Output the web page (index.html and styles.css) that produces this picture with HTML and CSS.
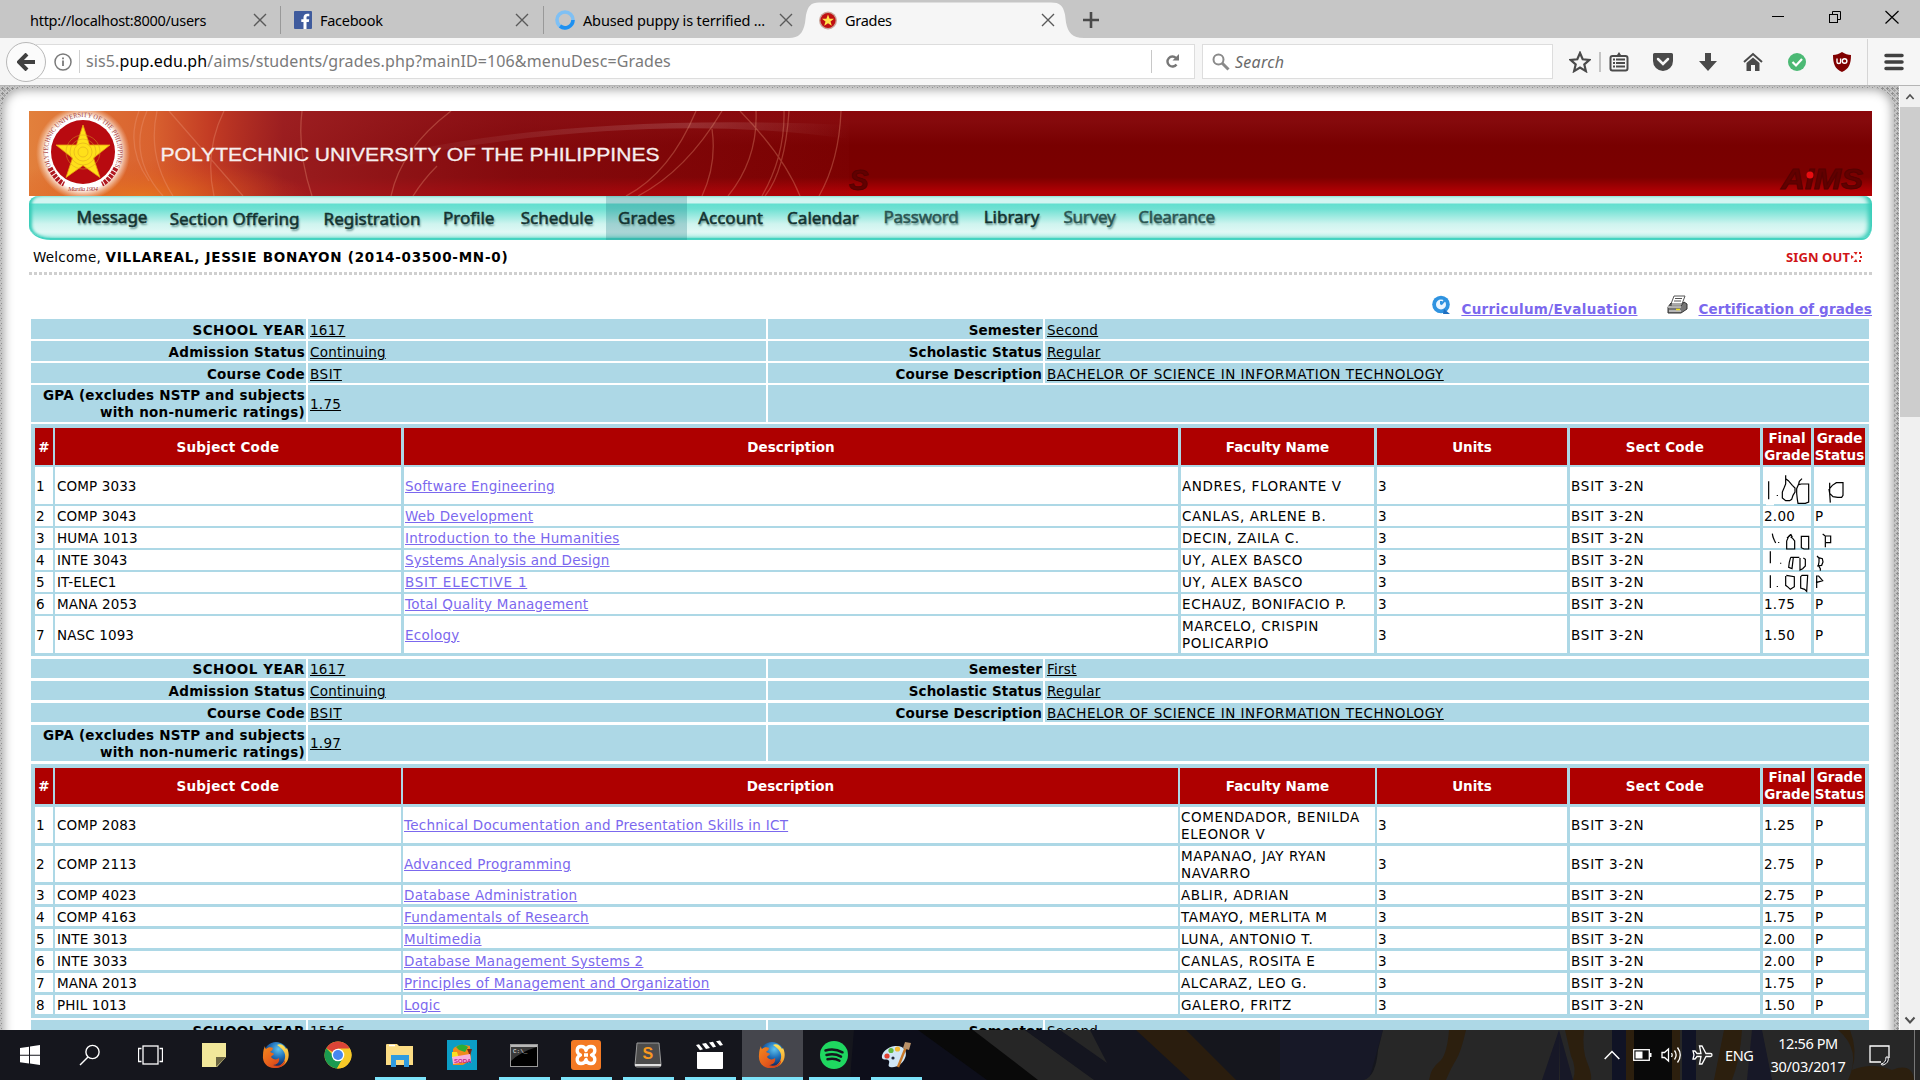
FILE: index.html
```html
<!DOCTYPE html>
<html lang="en">
<head>
<meta charset="utf-8">
<title>Grades</title>
<link rel="stylesheet" href="styles.css">
</head>
<body>
<svg class="defs" width="0" height="0">
  <defs>
    <radialGradient id="globe" cx=".6" cy=".3" r=".7"><stop offset="0" stop-color="#5fc3ee"/><stop offset=".5" stop-color="#1f6fb8"/><stop offset="1" stop-color="#12265c"/></radialGradient>
    <linearGradient id="fox" x1="0" y1="0" x2="1" y2="1"><stop offset="0" stop-color="#f28a1c"/><stop offset=".5" stop-color="#e8601c"/><stop offset="1" stop-color="#c8301a"/></linearGradient>
    <linearGradient id="tail" x1="0" y1="0" x2="0" y2="1"><stop offset="0" stop-color="#ffe45a"/><stop offset="1" stop-color="#f28a1c"/></linearGradient>
    <symbol id="firefox" viewBox="0 0 28 28">
      <circle cx="14" cy="13" r="12" fill="url(#globe)"/>
      <path d="M15 4c3-2 7 0 9 4l1-1c3 6 2 13-3 17-4 3-9 3-12 2 7 1 12-3 13-9 1-5-2-9-8-13z" fill="url(#tail)"/>
      <path d="M3 5c0 1 0 2 1 3 2-2 5-2 7-1 0 2-2 3-3 4 1 1 4 1 4 2s-2 1-3 3c2 3 6 3 8 1 1 4-2 7-6 7 5 2 10 0 12-5 1 3-3 8-9 8C6 28 0 22 1 14c0-4 1-7 2-9z" fill="url(#fox)"/>
    </symbol>
    <symbol id="close" viewBox="0 0 14 14"><path d="M1 1 13 13M13 1 1 13" stroke="currentColor" stroke-width="1.4" fill="none"/></symbol>
  </defs>
</svg>

<header class="browser">
  <div class="tabs">
    <div class="tab tab-1"><span class="tab-title">http://localhost:8000/users</span><svg class="x"><use href="#close"/></svg></div>
    <div class="tab tab-2">
      <svg class="fav" width="18" height="18" viewBox="0 0 18 18"><rect width="18" height="18" rx="1" fill="#3f5b9d"/><path d="M9.500 18v-7H7.300V8.300h2.200V6.600c0-2.600 1.500-3.900 3.800-3.900h2v2.600h-1.400c-1.100 0-1.400.5-1.400 1.400v1.600h2.700l-.4 2.700h-2.300v7z" fill="#fff"/></svg>
      <span class="tab-title">Facebook</span><svg class="x"><use href="#close"/></svg></div>
    <div class="tab tab-3">
      <svg class="fav" width="20" height="20" viewBox="0 0 20 20"><circle cx="10" cy="10" r="8" fill="none" stroke="#7fc0f4" stroke-width="3.600"/><path d="M18 10a8 8 0 0 1-13 6" fill="none" stroke="#1e90f0" stroke-width="3.600"/></svg>
      <span class="tab-title wide">Abused puppy is terrified ...</span><svg class="x"><use href="#close"/></svg></div>
    <div class="tab-active">
      <svg class="tab-shape" width="296" height="36" viewBox="0 0 296 36"><path d="M0 36c10 0 14-5 16-15l1-8C19 4 22 .5 30 .5h232c9 0 12 3 14 12l1 8c2 10 6 15.500 18 15.500z" fill="#f6f6f6"/></svg>
      <svg class="fav" width="18" height="19" viewBox="0 0 18 19"><circle cx="9" cy="9.500" r="9" fill="#c9a59a"/><circle cx="9" cy="9.500" r="7.600" fill="#c00f12"/><path d="M9 3.500l1.600 4.200 4.400.1-3.500 2.700 1.300 4.200L9 12.200l-3.800 2.500 1.300-4.200L3 7.800l4.400-.1z" fill="#ffe34a"/></svg>
      <span class="tab-title">Grades</span><svg class="x"><use href="#close"/></svg>
    </div>
    <svg class="plus" width="16" height="16" viewBox="0 0 16 16"><path d="M8 0v16M0 8h16" stroke="#4a4a4a" stroke-width="2.600"/></svg>
    <div class="win">
      <svg width="14" height="14" viewBox="0 0 14 14"><path d="M1 6.500h12" stroke="#000"/></svg>
      <svg width="14" height="14" viewBox="0 0 14 14" fill="none" stroke="#000"><rect x="1.500" y="4.500" width="8" height="8"/><path d="M4.500 4V1.500h8v8H10"/></svg>
      <svg width="14" height="14" viewBox="0 0 14 14"><path d="M.5 1 13.500 13.500M13.500 1 .5 13.500" stroke="#000" stroke-width="1.200"/></svg>
    </div>
  </div>
  <div class="toolbar">
    <div class="back"><svg width="18" height="18" viewBox="0 0 18 18"><path d="M10 1 2 9l8 8M2.500 9H18" fill="none" stroke="#404040" stroke-width="4"/></svg></div>
    <div class="url">
      <svg class="info-icon" width="18" height="18" viewBox="0 0 18 18"><circle cx="9" cy="9" r="8" fill="none" stroke="#7a7a7a" stroke-width="1.500"/><path d="M9 7.500V13M9 4.500v1.800" stroke="#7a7a7a" stroke-width="1.800"/></svg>
      <span class="address">sis5.<b>pup.edu.ph</b>/aims/students/grades.php?mainID=106&amp;menuDesc=Grades</span>
      <div class="reload"><svg width="15" height="15" viewBox="0 0 15 15"><path d="M11.500 10.500A5 5 0 1 1 11 4" fill="none" stroke="#777" stroke-width="2.400"/><path d="M14 0v6.500H7.500z" fill="#777"/></svg></div>
    </div>
    <div class="search">
      <svg width="18" height="18" viewBox="0 0 18 18"><circle cx="6.500" cy="6.500" r="5" fill="none" stroke="#8a8a8a" stroke-width="2"/><path d="m10 10 6.500 6.500" stroke="#8a8a8a" stroke-width="3"/></svg>
      <span>Search</span>
    </div>
    <div class="tools">
      <svg width="22" height="22" viewBox="0 0 22 22"><path d="m11 2 2.700 6.300 6.800.6-5.200 4.500 1.600 6.700-5.900-3.600-5.900 3.600 1.600-6.700L1.500 8.900l6.800-.6z" fill="none" stroke="#4a4a4a" stroke-width="2.200"/></svg>
      <i class="bar"></i>
      <svg class="list" width="20" height="20" viewBox="0 0 20 20"><path d="M6 3h2l2-3 2 3h2v2H6z" fill="#4a4a4a"/><rect x="1.500" y="4" width="17" height="14.500" rx="2" fill="none" stroke="#4a4a4a" stroke-width="2"/><path d="M4 7.500h2M7 7.500h9M4 11h2M7 11h9M4 14.500h2M7 14.500h9" stroke="#4a4a4a" stroke-width="1.800"/></svg>
      <svg width="22" height="20" viewBox="0 0 22 20"><path d="M2.500 1h17A1.500 1.500 0 0 1 21 2.500V9a10 10 0 0 1-20 0V2.500A1.500 1.500 0 0 1 2.500 1z" fill="#4a4a4a"/><path d="m6 7 5 5 5-5" fill="none" stroke="#f6f6f6" stroke-width="2.500" stroke-linecap="round"/></svg>
      <svg width="20" height="20" viewBox="0 0 20 20"><path d="M7 1h6v8h6l-9 10L1 9h6z" fill="#4a4a4a"/></svg>
      <svg width="20" height="20" viewBox="0 0 20 20"><path d="m1 10 9-8 9 8" fill="none" stroke="#4a4a4a" stroke-width="2"/><path d="M10 5.500 3.500 11v8H8v-6h4v6h4.500v-8z" fill="#4a4a4a"/></svg>
      <svg width="20" height="20" viewBox="0 0 20 20"><circle cx="10" cy="10" r="9" fill="#4bb974"/><path d="m5.500 10 3.500 3.500 6-6.500" fill="none" stroke="#fff" stroke-width="2.200"/></svg>
      <svg width="20" height="20" viewBox="0 0 20 20"><path d="M10 0c3 2 6 3 9 3 0 9-2 14-9 17C3 17 1 12 1 3c3 0 6-1 9-3z" fill="#800000"/><path d="M5 6.500v3.500q0 1.500 1.800 1.500t1.800-1.500V6.500" fill="none" stroke="#fff" stroke-width="1.400"/><circle cx="12.600" cy="9" r="2.300" fill="none" stroke="#fff" stroke-width="1.400"/></svg>
      <i class="bar tall-bar"></i>
      <svg width="20" height="18" viewBox="0 0 20 18"><path d="M2 2.500h16M2 9h16M2 15.500h16" stroke="#404040" stroke-width="3.500" stroke-linecap="round"/></svg>
    </div>
  </div>
</header>

<div class="viewport">
<div class="patterned">
<main class="sheet">
  <div class="banner">
    <svg width="1843" height="85" viewBox="0 0 1843 85">
      <defs>
        <linearGradient id="red" x1="0" y1="0" x2="0" y2="1"><stop offset="0" stop-color="#8a060a"/><stop offset=".12" stop-color="#850a0c"/><stop offset=".4" stop-color="#780000"/><stop offset=".78" stop-color="#7b0000"/><stop offset=".95" stop-color="#b20004"/><stop offset="1" stop-color="#b40004"/></linearGradient>
        <linearGradient id="orange" x1="0" y1="0" x2="1" y2="0"><stop offset="0" stop-color="#e2803c"/><stop offset=".15" stop-color="#d9622f"/><stop offset=".22" stop-color="#c33c24"/><stop offset=".31" stop-color="#a02224" stop-opacity=".85"/><stop offset=".6" stop-color="#8c1218" stop-opacity=".55"/><stop offset="1" stop-color="#8a1014" stop-opacity=".1"/></linearGradient>
        <radialGradient id="glow"><stop offset="0" stop-color="#fff"/><stop offset=".78" stop-color="#fff"/><stop offset="1" stop-color="#fbd9c4" stop-opacity="0"/></radialGradient>
        <radialGradient id="flame" cx=".4" cy="1" r=".6"><stop offset="0" stop-color="#e8781c" stop-opacity=".8"/><stop offset="1" stop-color="#d8501c" stop-opacity="0"/></radialGradient>
        <linearGradient id="sweep" x1="0" y1="0" x2="1" y2="0"><stop offset="0" stop-color="#fff" stop-opacity="0"/><stop offset=".7" stop-color="#fff" stop-opacity=".14"/><stop offset="1" stop-color="#fff" stop-opacity="0"/></linearGradient>
        <path id="ring" d="M23.700 58.500A35 35 0 1 1 84.300 58.500"/>
      </defs>
      <rect width="1843" height="85" fill="url(#red)"/>
      <rect width="820" height="85" fill="url(#orange)"/>
      <rect y="25" width="280" height="60" fill="url(#flame)"/>
      <path d="M300 60Q500 0 820 14v14Q600-4 300 60z" fill="url(#sweep)"/>
      <g fill="none" stroke="#f0a080" stroke-opacity=".32" stroke-width="1.300">
        <path d="M118 0q-20 45 16 85M128 0q-10 45 16 85M110 0q-14 36 10 70M140 0 214 85M195 0q-20 40-10 85M273 0q-5 40 10 85M422 0q-50 38-60 85M408 55q-14 14-24 30"/>
        <path d="M693 0q-36 60-84 85M667 0q-26 62-70 85M711 0q44 45 60 85M683 18q5 35-10 67M727 0q2 48-28 85M755 0q1 45-22 85M812 0q-2 50-22 85M760 0q-4 60-24 85"/>
      </g>
      <circle cx="54" cy="42" r="47" fill="url(#glow)"/>
      <circle cx="54" cy="41" r="32" fill="#b80a10"/>
      <path d="m54 14 6.500 20 20.500 0-16.500 13 6.500 19.500-17-12-17 12 6.500-19.500-16.500-13h20.500z" fill="#ffe01a" stroke="#e8a010" stroke-width=".8"/>
      <g fill="none" stroke="#d8a020" stroke-width=".7" opacity=".7"><circle cx="54" cy="41" r="5"/><circle cx="54" cy="41" r="9"/><circle cx="54" cy="41" r="13"/><circle cx="54" cy="41" r="17"/></g>
      <path d="M21 57q7 13 14 16M87 57q-7 13-14 16" fill="none" stroke="#b01820" stroke-width="5" stroke-dasharray="3 1"/>
      <text class="seal"><textPath href="#ring" textLength="143" lengthAdjust="spacingAndGlyphs">POLYTECHNIC UNIVERSITY OF THE PHILIPPINES</textPath></text>
      <text class="seal low" x="39" y="80" textLength="30">Manila 1904</text>
      <text class="uni" x="131.500" y="49.500" textLength="499" lengthAdjust="spacingAndGlyphs">POLYTECHNIC UNIVERSITY OF THE PHILIPPINES</text>
      <text class="emboss" x="820" y="79">S</text>
      <text class="emboss" x="1752" y="78" textLength="82" lengthAdjust="spacingAndGlyphs">AIMS</text>
      <circle cx="1781" cy="64" r="3.500" fill="#e80c10"/>
    </svg>
  </div>
  <nav class="menu">
    <a class="m1">Message</a><a class="m2">Section Offering</a><a class="m3">Registration</a><a class="m4">Profile</a><a class="m5">Schedule</a><a class="m6 on">Grades</a><a class="m7">Account</a><a class="m8">Calendar</a><a class="m9">Password</a><a class="m10">Library</a><a class="m11">Survey</a><a class="m12">Clearance</a>
  </nav>
  <div class="welcome">
    <span>Welcome, <b>VILLAREAL, JESSIE BONAYON (2014-03500-MN-0)</b></span>
    <span class="signout">SIGN OUT<svg width="11" height="12" viewBox="0 0 11 12" fill="#d8201c"><path d="M0 4v4l3-2zM2.500 1h4L5 4zM2.500 11h4L5 8zM8 1h2v2H8zM8 9h2v2H8zM9 5h2v2H9z"/></svg></span>
  </div>
  <div class="dots"></div>
  <div class="links">
    <svg width="19" height="20" viewBox="0 0 19 20"><circle cx="9" cy="9.500" r="8.800" fill="#2f93e0"/><path d="m12 14 6 5h-7z" fill="#1f6fc0"/><circle cx="9" cy="9.500" r="5" fill="#eaf5ff"/><path d="M9 9.500 14 4M9 9.500V6" stroke="#2f93e0" stroke-width="2"/></svg>
    <a class="l1">Curriculum/Evaluation</a>
    <svg class="printer" width="21" height="20" viewBox="0 0 21 20"><path d="M7 1h11l-3 8H4z" fill="#fff" stroke="#555"/><path d="M8 3.500h7M7 6h7" stroke="#555"/><path d="m4 8-3 4v6h13l6-4V9l-3-2-3 4H4z" fill="#777" stroke="#333"/><path d="M1 12h13M2 16h12" stroke="#ccc" stroke-width="1.500"/><path d="M9 14.500h4" stroke="#f0e020" stroke-width="1.500"/></svg>
    <a class="l2">Certification of grades</a>
  </div>

  <section class="term gap2">
    <table class="info">
      <colgroup><col class="i1"><col class="i2"><col class="i3"><col></colgroup>
      <tr><th class="caps">SCHOOL YEAR</th><td><u>1617</u></td><th>Semester</th><td><u>Second</u></td></tr>
      <tr><th>Admission Status</th><td><u>Continuing</u></td><th>Scholastic Status</th><td><u>Regular</u></td></tr>
      <tr><th>Course Code</th><td class="caps"><u>BSIT</u></td><th>Course Description</th><td class="caps"><u>BACHELOR OF SCIENCE IN INFORMATION TECHNOLOGY</u></td></tr>
      <tr class="tall"><th>GPA (excludes NSTP and subjects<br>with non-numeric ratings)</th><td><u>1.75</u></td><td colspan="2"></td></tr>
    </table>
    <div class="grades">
    <table>
      <colgroup><col class="g1"><col class="g2"><col class="g3"><col class="g4"><col class="g5"><col class="g5"><col class="g6"><col class="g7"></colgroup>
      <tr class="tall"><th>#</th><th>Subject Code</th><th>Description</th><th>Faculty Name</th><th>Units</th><th>Sect Code</th><th>Final<br>Grade</th><th>Grade<br>Status</th></tr>
      <tr class="tall"><td>1</td><td>COMP 3033</td><td><a>Software Engineering</a></td><td>ANDRES, FLORANTE V</td><td>3</td><td>BSIT 3-2N</td><td></td><td></td></tr>
      <tr><td>2</td><td>COMP 3043</td><td><a>Web Development</a></td><td>CANLAS, ARLENE B.</td><td>3</td><td>BSIT 3-2N</td><td>2.00</td><td>P</td></tr>
      <tr><td>3</td><td>HUMA 1013</td><td><a>Introduction to the Humanities</a></td><td>DECIN, ZAILA C.</td><td>3</td><td>BSIT 3-2N</td><td></td><td></td></tr>
      <tr><td>4</td><td>INTE 3043</td><td><a>Systems Analysis and Design</a></td><td>UY, ALEX BASCO</td><td>3</td><td>BSIT 3-2N</td><td></td><td></td></tr>
      <tr><td>5</td><td>IT-ELEC1</td><td class="caps"><a>BSIT ELECTIVE 1</a></td><td>UY, ALEX BASCO</td><td>3</td><td>BSIT 3-2N</td><td></td><td></td></tr>
      <tr><td>6</td><td>MANA 2053</td><td><a>Total Quality Management</a></td><td>ECHAUZ, BONIFACIO P.</td><td>3</td><td>BSIT 3-2N</td><td>1.75</td><td>P</td></tr>
      <tr class="tall"><td>7</td><td>NASC 1093</td><td><a>Ecology</a></td><td>MARCELO, CRISPIN<br>POLICARPIO</td><td>3</td><td>BSIT 3-2N</td><td>1.50</td><td>P</td></tr>
    </table>
    <svg class="pen" width="140" height="140" viewBox="0 0 420 420">
      <path d="M78 133h24" stroke="#fff" stroke-width="6"/>
      <g fill="none" stroke="#000" stroke-width="3.600">
        <path d="M86 64v54M112 105v3M137 46v26l-4 10-6 14v18l10 8h12l6-4 4-12 6-10v-12l-8-8-12-14-8-6M186 56l-8 8-2 8-6 14v14l2 18 2 12h22l10-4V72h-22l-8 2"/>
        <path d="M269 68v32l2 28M307 68h-18l-12 8-10 12 2 12 10 10 14 2h12l4-6V68z"/>
        <path d="M97 221l2 10 4 10 4 8M116 246v3M141 234l12-10 4 8M152 223l-6 6-6 14v24h24v-24l-6-8-6-4M184 227v36l8 4h14v-38h-22M248 222l8 6v34M258 228h14v20h-14"/>
        <path d="M91 274v36M122 308v3M152 292l-4 14-2 16 10 4 4-34M152 292h26M180 294v36l8-4 8-8v-20l-6-4M231 288l6 6v12l-2 10 6 10v6M233 292l14 4 2 10-4 10-14 2"/>
        <path d="M91 346v38M112 378v3M137 348l0 28 8 6 6 6 12-8 0-30-24-4M186 346l-4 4 0 34 12 4 6 6 3-48h-16zM230 348v36M228 348h8l12 14-20 6"/>
      </g>
    </svg>
    </div>
  </section>

  <section class="term gap3">
    <table class="info">
      <colgroup><col class="i1"><col class="i2"><col class="i3"><col></colgroup>
      <tr><th class="caps">SCHOOL YEAR</th><td><u>1617</u></td><th>Semester</th><td><u>First</u></td></tr>
      <tr><th>Admission Status</th><td><u>Continuing</u></td><th>Scholastic Status</th><td><u>Regular</u></td></tr>
      <tr><th>Course Code</th><td class="caps"><u>BSIT</u></td><th>Course Description</th><td class="caps"><u>BACHELOR OF SCIENCE IN INFORMATION TECHNOLOGY</u></td></tr>
      <tr class="tall"><th>GPA (excludes NSTP and subjects<br>with non-numeric ratings)</th><td><u>1.97</u></td><td colspan="2"></td></tr>
    </table>
    <div class="grades">
    <table>
      <colgroup><col class="g1"><col class="g2"><col class="g3"><col class="g4"><col class="g5"><col class="g5"><col class="g6"><col class="g7"></colgroup>
      <tr class="tall"><th>#</th><th>Subject Code</th><th>Description</th><th>Faculty Name</th><th>Units</th><th>Sect Code</th><th>Final<br>Grade</th><th>Grade<br>Status</th></tr>
      <tr class="tall"><td>1</td><td>COMP 2083</td><td><a>Technical Documentation and Presentation Skills in ICT</a></td><td>COMENDADOR, BENILDA<br>ELEONOR V</td><td>3</td><td>BSIT 3-2N</td><td>1.25</td><td>P</td></tr>
      <tr class="tall"><td>2</td><td>COMP 2113</td><td><a>Advanced Programming</a></td><td>MAPANAO, JAY RYAN<br>NAVARRO</td><td>3</td><td>BSIT 3-2N</td><td>2.75</td><td>P</td></tr>
      <tr><td>3</td><td>COMP 4023</td><td><a>Database Administration</a></td><td>ABLIR, ADRIAN</td><td>3</td><td>BSIT 3-2N</td><td>2.75</td><td>P</td></tr>
      <tr><td>4</td><td>COMP 4163</td><td><a>Fundamentals of Research</a></td><td>TAMAYO, MERLITA M</td><td>3</td><td>BSIT 3-2N</td><td>1.75</td><td>P</td></tr>
      <tr><td>5</td><td>INTE 3013</td><td><a>Multimedia</a></td><td>LUNA, ANTONIO T.</td><td>3</td><td>BSIT 3-2N</td><td>2.00</td><td>P</td></tr>
      <tr><td>6</td><td>INTE 3033</td><td><a>Database Management Systems 2</a></td><td>CANLAS, ROSITA E</td><td>3</td><td>BSIT 3-2N</td><td>2.00</td><td>P</td></tr>
      <tr><td>7</td><td>MANA 2013</td><td><a>Principles of Management and Organization</a></td><td>ALCARAZ, LEO G.</td><td>3</td><td>BSIT 3-2N</td><td>1.75</td><td>P</td></tr>
      <tr><td>8</td><td>PHIL 1013</td><td><a>Logic</a></td><td>GALERO, FRITZ</td><td>3</td><td>BSIT 3-2N</td><td>1.50</td><td>P</td></tr>
    </table>
    </div>
  </section>

  <section class="term gap2">
    <table class="info">
      <colgroup><col class="i1"><col class="i2"><col class="i3"><col></colgroup>
      <tr><th class="caps">SCHOOL YEAR</th><td><u>1516</u></td><th>Semester</th><td><u>Second</u></td></tr>
    </table>
  </section>
</main>
</div>
<div class="scrollbar">
  <svg width="20" height="26" viewBox="0 0 20 26"><path d="m5.500 16 4.500-5 4.500 5" fill="none" stroke="#505050" stroke-width="2"/></svg>
  <div class="thumb"></div>
  <svg width="20" height="20" viewBox="0 0 20 20"><path d="m5.500 7.500 4.500 5 4.500-5" fill="none" stroke="#505050" stroke-width="2"/></svg>
</div>
</div>

<footer class="taskbar">
  <svg class="wall" width="1070" height="50" viewBox="850 0 1070 50" preserveAspectRatio="none">
    <path d="M854 0h90l60 50H850z" fill="#0d0e1a"/><path d="M918 0h57l67 50h-55z" fill="#090909"/><path d="M973 0h52l70 50h-57z" fill="#262626"/>
    <path d="M1025 0h111l54 50h-96z" fill="#14151f"/><path d="M1060 0h30l17 33z" fill="#262626"/><path d="M1136 0h50l50 50h-46z" fill="#2a1d0e"/>
    <path d="M1280 0h103l-14 50h-89z" fill="#171827"/><path d="M1383 0h537v50H1364q12-4 14-30z" fill="#272727"/>
    <path d="M1449 0h17q-5 22-10 30t-10 20h-17q2-12 10-18t10-32z" fill="#2c1f0e"/>
    <path d="m1559 0 1 50h-18zM1559 0v50h14z" fill="#171827"/><path d="M1565 0h19q-2 20 3 32t4 18h-18q4-12-2-24z" fill="#2c1f0e"/>
    <path d="M1612 0h14v50h-14z" fill="#101325"/><path d="M1626 0h8v50h-8zM1672 0h8v50h-8z" fill="#2c1f0e"/><path d="M1634 0h38v50h-38z" fill="#090909"/><path d="M1682 0h14v50h-14z" fill="#101325"/>
    <path d="M1724 0h18q-2 30-10 50h-18z" fill="#2c1f0e"/><path d="m1752 0 10 0 10 50h-25z" fill="#171827"/><path d="M1838 0h12q8 20 2 40 20-8 40 0 20-8 22 10h-66q14-30-10-50z" fill="#2c1f0e"/>
  </svg>
  <div class="slot sys"><svg width="20" height="20" viewBox="0 0 20 20" fill="#fff"><path d="M0 3l9-1.300v8H0zM10 1.500 20 0v9.700H10zM0 10.700h9v7.800l-9-1.200zM10 10.700h10V20l-10-1.400z"/></svg></div>
  <div class="slot sys"><svg width="22" height="22" viewBox="0 0 22 22" fill="none" stroke="#fff" stroke-width="1.400"><circle cx="13.500" cy="8" r="6.600"/><path d="m9 13-8 8"/></svg></div>
  <div class="slot sys"><svg width="25" height="20" viewBox="0 0 25 20" fill="none" stroke="#fff" stroke-width="1.300"><rect x="5" y="1" width="15" height="18"/><path d="M3.500 3.500h-3v13h3M21.500 3.500h3v13h-3"/></svg></div>
  <div class="slot app"><svg width="24" height="24" viewBox="0 0 24 24"><path d="M0 0h24v14l-9 10H0z" fill="#f1e79a"/><path d="M14 14h10l-10 10z" fill="#6a6441"/></svg></div>
  <div class="slot app"><svg width="28" height="28"><use href="#firefox"/></svg></div>
  <div class="slot app"><svg width="28" height="28" viewBox="0 0 28 28"><circle cx="14" cy="14" r="13.500" fill="#f7c928"/><path d="M14 14 2.300 7.200A13.500 13.500 0 0 1 25.700 7.200z" fill="#dc4437"/><path d="M2.300 7.200A13.500 13.500 0 0 0 13 27.500L19 17 14 14H9z" fill="#1a9a50"/><path d="M14 7.500h11.800a13.500 13.500 0 0 1-12.800 20L19 17z" fill="#f7c928"/><circle cx="14" cy="14" r="6.300" fill="#fff"/><circle cx="14" cy="14" r="5" fill="#4787f0"/></svg></div>
  <div class="slot app open"><svg width="28" height="24" viewBox="0 0 28 24"><path d="M0 2q0-1 1-1h10l2 2h14v19H0z" fill="#fbdc84"/><path d="M3 2.500h6" stroke="#fff" stroke-width="1.500"/><path d="M5 24V12h18v12h-5v-7h-8v7z" fill="#2f9be0"/></svg></div>
  <div class="slot app"><svg width="30" height="30" viewBox="0 0 30 30"><rect width="30" height="30" fill="#0b9dc5"/><path d="M6 9q5-6 17-3l1 14-8 5H6z" fill="#f08a1c"/><path d="M9 7q6-5 12 0l-3 5-6-2z" fill="#2cae34"/><path d="M5 12h5l2 6H5z" fill="#f8e020"/><path d="M20 9h5l-2 7z" fill="#7a2616"/><path d="m5 17 18-3 1 7-18 3z" fill="#f7b0dc"/><text class="soda" x="7" y="22.500">SODA</text></svg></div>
  <div class="slot app open"><svg width="28" height="23" viewBox="0 0 28 23"><rect x=".5" y=".5" width="27" height="22" fill="#000" stroke="#999"/><path d="M1 1h26v2H1z" fill="#b8b8b8"/><path d="M1 3h26Q10 8 1 17z" fill="#3a3a3a"/><text class="cmd" x="3" y="9">C:\_</text></svg></div>
  <div class="slot app open"><svg width="30" height="30" viewBox="0 0 30 30"><rect width="30" height="30" rx="3" fill="#f47a24"/><path d="M9.500 15C4.500 13 5.500 6.500 10 6.500c3 0 4.500 2 5 4 .5-2 2-4 5-4 4.500 0 5.500 6.500.5 8.500 5 2 4 8.500-.5 8.500-3 0-4.500-2-5-4-.5 2-2 4-5 4-4.500 0-5.500-6.500-.5-8.500zM13 15h4" fill="none" stroke="#fff" stroke-width="3.300" stroke-linejoin="round"/></svg></div>
  <div class="slot app open"><svg width="28" height="26" viewBox="0 0 28 26"><path d="M3 1h22l2 22q0 2-2 2H3q-2 0-2-2z" fill="#4c4c4c" stroke="#999"/><path d="M1 22h26v2H1z" fill="#e0e0e0"/><text class="subl" x="8.500" y="17">S</text></svg></div>
  <div class="slot app open"><svg width="28" height="30" viewBox="0 0 28 30"><path d="M1 12h26v16q0 1-1 1H2q-1 0-1-1z" fill="#fff"/><path d="m0 5 3-.8 4 5-3 1zM6 3.800l4-.8 4 5-4 .9zM13 2.500l4-.8 3 5-3 .9zM20 1.200l4-.8L27 5l-3 .8z" fill="#fff"/></svg></div>
  <div class="slot app open active"><svg width="28" height="28"><use href="#firefox"/></svg></div>
  <div class="slot app open"><svg width="28" height="28" viewBox="0 0 28 28"><circle cx="14" cy="14" r="14" fill="#1fd760"/><path d="M5.500 9.500q9-2.500 17 1.800M6.500 14q8-2 14.500 1.600M7.500 18.300q7-1.600 12 1.400" fill="none" stroke="#15161d" stroke-width="2.500" stroke-linecap="round"/></svg></div>
  <div class="slot app open"><svg width="30" height="28" viewBox="0 0 30 28"><path d="M14 5c9-1 13 6 10 12-3 7-9 10-15 9-3-1 0-4-1-6-1-3-6 0-7-3-1-5 5-11 13-12z" fill="#cfe6f6"/><circle cx="6" cy="15" r="2.600" fill="#e04030"/><circle cx="10" cy="9.500" r="2.600" fill="#60b840"/><circle cx="16.500" cy="8" r="2.600" fill="#f4b830"/><circle cx="12" cy="17" r="1.600" fill="#20283a"/><path d="M17 26 25 6" stroke="#c87828" stroke-width="2.400"/><path d="m22 7 2-6 6 1-2 7z" fill="#b89068"/></svg></div>
  <div class="tray">
    <svg class="t1" width="16" height="10" viewBox="0 0 16 10"><path d="M.7 9 8 1.500 15.300 9" fill="none" stroke="#fff" stroke-width="1.500"/></svg>
    <svg class="t2" width="19" height="12" viewBox="0 0 19 12"><rect x=".7" y=".7" width="15.600" height="10.600" fill="none" stroke="#fff" stroke-width="1.300"/><path d="M2.500 2.500h7v7h-7zM17 4h1.500v4H17z" fill="#fff"/></svg>
    <svg class="t3" width="21" height="18" viewBox="0 0 21 18" fill="none" stroke="#fff" stroke-width="1.300"><path d="M1 6.500h2.500L7.500 3v12l-4-3.500H1z"/><path d="M10.500 7q1.300 2 0 4M13.500 4.500q3.300 4.500 0 9M16.500 1.500q5.500 7.500 0 15"/></svg>
    <svg class="t4" width="21" height="20" viewBox="0 0 21 20"><path d="M1 6h2l2 2.500h4L7.500 1H10l4 7.500h4.500a1.500 1.500 0 0 1 0 3H14L10 19H7.500L9 11.500H5L3 14H1l1-4z" fill="none" stroke="#fff" stroke-width="1.300"/></svg>
    <span class="lang">ENG</span>
    <div class="clock"><span>12:56 PM</span><span>30/03/2017</span></div>
    <svg class="t5" width="21" height="21" viewBox="0 0 21 21"><path d="M12 17H1V1h19v12" fill="none" stroke="#fff" stroke-width="1.300"/><path d="M19 12q1.500 6-5 8-2 0-2-1 5-1 5-7z" fill="#15161d" stroke="#fff"/></svg>
    <i class="peek"></i>
  </div>
</footer>
</body>
</html>
```
FILE: styles.css
```css
* { box-sizing: border-box; }
body { margin: 0; width: 1920px; height: 1080px; overflow: hidden; display: flex; flex-direction: column; font-family: "DejaVu Sans", Verdana, sans-serif; font-size: 13.500px; letter-spacing: .25px; color: #000; background: #fff; }
svg { flex: none; display: block; }
.defs { position: absolute; }

/* browser chrome */
.browser { flex: none; height: 86px; font-family: "Noto Sans", "Open Sans", sans-serif; border-bottom: 1px solid #b5b5b5; background: #f6f6f6; }
.tabs { height: 38px; background: #c6c6c6; display: flex; align-items: center; }
.tab { height: 28px; margin-top: 2px; display: flex; align-items: center; border-right: 1px solid #999; }
.tab-title { font-size: 14.500px; line-height: 20px; letter-spacing: -.28px; white-space: nowrap; flex: 1; }
.tab-title.wide { letter-spacing: -.15px; }
.x { width: 14px; height: 14px; color: #5a5a5a; }
.fav { margin-right: 8px; }
.tab-1 { width: 281px; padding: 0 13px 0 30px; }
.tab-2 { width: 263px; padding: 0 14px 0 13px; }
.tab-3 { width: 250px; padding: 0 1px 0 11px; border: 0; }
.tab-active { position: relative; width: 280px; height: 38px; padding: 2px 19px 0 25px; display: flex; align-items: center; }
.tab-shape { position: absolute; left: -5px; top: 2px; }
.tab-active > :not(.tab-shape) { position: relative; }
.plus { margin-left: 9px; margin-top: 2px; }
.win { margin-left: auto; display: flex; gap: 43px; padding: 0 21px 4px 0; }
.toolbar { height: 47px; display: flex; align-items: center; padding-left: 6px; }
.back { flex: none; z-index: 1; width: 40px; height: 40px; border: 1px solid #b8b8b8; border-radius: 50%; background: #fbfbfb; display: flex; align-items: center; justify-content: center; }
.url { width: 1159px; height: 35px; margin-left: -10px; border: 1px solid #ddd; background: #fff; display: flex; align-items: center; padding-left: 17px; }
.address { margin-left: 7px; padding-left: 6px; height: 23px; border-left: 1px solid #d0d0d0; font-size: 16px; line-height: 23px; letter-spacing: .12px; color: #7a7a7a; flex: 1; }
.address b { font-weight: 400; color: #000; }
.reload { width: 43px; height: 23px; border-left: 1px solid #c8c8c8; display: flex; align-items: center; justify-content: center; }
.reload svg { margin-right: 2px; }
.search { width: 351px; height: 35px; margin-left: 7px; border: 1px solid #ddd; background: #fff; display: flex; align-items: center; gap: 5px; padding-left: 9px; font-size: 16px; font-style: italic; color: #6a6a6a; }
.tools { flex: 1; height: 100%; display: flex; align-items: center; padding: 0 16px 0 16px; }
.tools svg { margin-right: 24.500px; }
.tools svg:first-child { margin-right: 8px; }
.tools .list { margin-right: 22.500px; }
.tools svg:last-child, .tools svg:nth-last-child(3) { margin-right: 0; }
.bar { width: 2px; height: 20px; margin-right: 8px; background: #c4c4c4; }
.bar.tall-bar { width: 1px; height: 46px; margin: 0 16px 0 auto; background: #d5d5d5; }

/* page */
.viewport { height: 944px; display: flex; overflow: hidden; }
.patterned { width: 1899px; padding: 2px 5px 0 2px; background-color: #c4c4c4; background-image: radial-gradient(#8f8f8f 1px, transparent 1.200px), radial-gradient(#a4a4a4 1px, transparent 1.200px); background-size: 5px 5px; background-position: 0 0, 2px 2px; }
.sheet { height: 990px; padding: 23px 20px 0 27px; border-radius: 20px; background: #fff; box-shadow: inset 0 0 11px 1px #999; }
.banner { width: 1843px; height: 85px; }
.banner text { letter-spacing: 0; }
.uni { font: 19px "Liberation Sans", Arial, sans-serif; fill: #f7eeee; stroke: #f7eeee; stroke-width: .3px; }
.seal { font: 7px "Liberation Serif", serif; fill: #a33a3a; }
.seal.low { font-size: 7px; font-style: italic; }
.emboss { font: italic bold 29px "Liberation Sans", Arial, sans-serif; fill: #620000; stroke: #560000; stroke-width: 1px; }
.menu { width: 1843px; height: 44px; border-radius: 10px 8px 10px 22px / 8px 8px 14px 14px; border-bottom: 2px solid #45d3c1; display: flex; background: linear-gradient(#d3f5f1 0 7px, #63dfcf 8px, #6fe1d3 13px, #cff4ef 28px, #e0f8f5 36px, #b9efe8 42px); box-shadow: inset 4px 0 3px -1px #38cdb9, inset -5px 0 4px -1px #38cdb9; }
.menu a { flex: none; height: 44px; text-align: center; font: 400 17px/43px "Noto Sans", sans-serif; letter-spacing: 0; color: #123230; text-shadow: 1px 2px 2px #5a8a86; white-space: nowrap; -webkit-text-stroke: .5px #123230; text-decoration: none; }
.menu .m1 { width: 114px; margin-left: 26px; line-height: 42px; }
.menu .m2 { width: 131px; line-height: 46px; }
.menu .m3 { width: 144px; line-height: 46px; }
.menu .m4 { width: 50px; margin-left: -1px; margin-right: 1px; }
.menu .m5 { width: 112px; padding-left: 14px; }
.menu .on { width: 81px; background: rgba(30,120,130,.27); }
.menu .m7 { width: 87px; }
.menu .m8 { width: 98px; }
.menu .m9 { width: 98px; }
.menu .m10 { width: 83px; line-height: 42px; }
.menu .m11 { width: 73px; }
.menu .m12 { width: 101px; }
.menu .m9, .menu .m11, .menu .m12 { color: #2a5552; line-height: 42px; letter-spacing: -.25px; -webkit-text-stroke: .5px #2a5552; }
.welcome { width: 1843px; height: 32px; padding: 1px 10px 0 4px; display: flex; justify-content: space-between; align-items: center; }
.welcome b { letter-spacing: .75px; }
.signout { display: flex; align-items: center; gap: 1px; font: bold 13px "Noto Sans", sans-serif; letter-spacing: .1px; color: #d01418; }
.dots { width: 1843px; height: 3px; background: repeating-linear-gradient(90deg, #cfcfcf 0 3px, transparent 3px 5px); }
.links { width: 1843px; height: 44px; padding-bottom: 1px; display: flex; align-items: flex-end; justify-content: flex-end; font-weight: bold; }
.links svg { margin-bottom: 3px; }
.links a { line-height: 17px; margin-left: 10px; letter-spacing: .35px; }
.links .l2 { letter-spacing: .1px; }
.links .printer { margin-left: 30px; }
a { color: #7b68ee; text-decoration: underline; }

table { table-layout: fixed; border-collapse: separate; border-spacing: 0; width: 100%; }
.term { --g: 2px; width: 1838px; margin-left: 2px; }
.gap3 { --g: 3px; }
tr { height: 22px; }
tr.tall { height: 39px; }
th, td { padding: 1px 2px 0; line-height: 17px; border: 0 solid #fff; border-bottom-width: var(--g); text-align: left; white-space: nowrap; }
.info th, .info td { background: #add8e6; border-right-width: 2px; background-clip: padding-box; }
.gap2 .info th, .gap2 .info td { padding-top: 3px; }
.gap2 .info .tall > * { padding-top: 1px; }
.info th { text-align: right; padding-right: 1px; }
.info tr > :last-child { border-right: 0; }
.info td.caps { letter-spacing: .52px; }
.info th.caps { letter-spacing: .5px; }
.info th:nth-child(3) { letter-spacing: .1px; }
.i1 { width: 277px; }
.i2 { width: 460px; }
.i3 { width: 277px; }
.grades { position: relative; padding: 4px 1px 1px 4px; background: #add8e6; margin-bottom: 3px; }
.gap3 .grades { margin-bottom: 2px; }
.grades th, .grades td { background: #fff; border-color: #add8e6; border-right-width: 3px; }
.grades th { background: #ae0000; color: #fff; text-align: center; padding: 0; }
.gap2 .grades th { padding-top: 1px; }
.grades th:nth-child(3), .grades th:nth-child(4), .grades th:nth-child(5) { letter-spacing: 0; }
.grades th:nth-child(n+7) { letter-spacing: 0; }
.grades td:nth-child(1) { padding-left: 1px; }
.grades td:nth-child(2) { letter-spacing: .12px; }
.grades td:nth-child(n+3) { padding-left: 1px; }
.grades td:nth-child(4) { letter-spacing: .6px; }
.grades td:nth-child(6) { letter-spacing: .8px; }
.grades td.caps { letter-spacing: .75px; }
.grades th:first-child, .grades td:first-child, .gap3 .grades th:nth-child(-n+4), .gap3 .grades td:nth-child(-n+4) { border-right-width: 2px; }
.g1 { width: 20px; }
.g2 { width: 349px; }
.gap3 .g2 { width: 348px; }
.g3 { width: 777px; }
.g4 { width: 196px; }
.gap3 .g4 { width: 197px; }
.g5 { width: 193px; }
.g6 { width: 51px; }
.pen { position: absolute; left: 1709px; top: 36px; }

.scrollbar { width: 21px; background: #f0f0f0; border-left: 1px solid #fff; display: flex; flex-direction: column; }
.scrollbar svg:first-child { height: 21px; }
.thumb { height: 310px; margin-bottom: auto; background: #cdcdcd; }

/* taskbar */
.taskbar { position: relative; flex: none; height: 50px; background: #15161d; display: flex; color: #fff; }
.wall { position: absolute; right: 0; top: 0; }
.slot { position: relative; flex: none; display: flex; align-items: center; justify-content: center; }
.sys { width: 60px; }
.sys + .app { margin-left: 3px; }
.app { width: 62px; }
.open { background: linear-gradient(#7ce3fa, #7ce3fa) 50% 100% / 51px 3px no-repeat; }
.active { background: linear-gradient(#7ce3fa, #7ce3fa) 1px 100% / 61px 3px no-repeat, linear-gradient(#45464d, #45464d) 1px 0 / 61px 100% no-repeat; }
.tray { position: relative; margin-left: auto; display: flex; align-items: center; font: 14.500px "Noto Sans", sans-serif; letter-spacing: -.4px; }
.t2 { margin-left: 13px; }
.t3 { margin-left: 9px; }
.t4 { margin-left: 10px; }
.lang { width: 30px; margin-left: 12px; }
.clock { width: 84px; margin-left: 11px; margin-right: 1px; display: flex; flex-direction: column; align-items: center; line-height: 23px; }
.clock span:last-child { letter-spacing: -.2px; }
.t5 { margin-left: 18px; }
.peek { width: 1px; height: 50px; margin: 0 5px 0 24px; background: #777; }
.soda { font: bold 6px "Liberation Sans", sans-serif; fill: #c0208a; letter-spacing: 0; }
.cmd { font: 6px "Liberation Mono", monospace; fill: #eee; letter-spacing: 0; }
.subl { font: bold 16px "Liberation Sans", sans-serif; fill: #f89820; letter-spacing: 0; }
```
